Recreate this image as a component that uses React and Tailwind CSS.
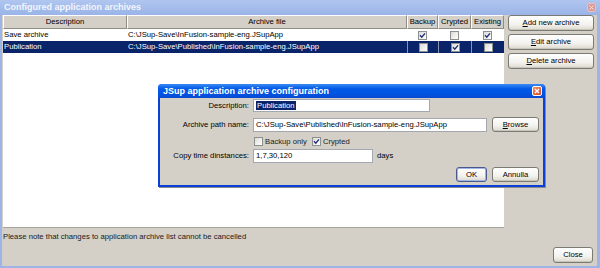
import React from "react";

function Check({ checked }) {
  return (
    <span className="inline-flex items-center justify-center w-[9px] h-[9px] border border-[#8e8f8f] bg-[linear-gradient(135deg,#dcdcd6,#ffffff)]">
      {checked && (
        <svg width="7" height="7" viewBox="0 0 7 7">
          <path d="M1 3.3 L2.8 5.2 L6 1.4" fill="none" stroke="#21307a" strokeWidth="1.4" />
        </svg>
      )}
    </span>
  );
}

function Btn({ children, className = "", def = false }) {
  return (
    <div
      className={
        "flex items-center justify-center rounded-[3px] border text-[7.7px] text-black bg-[linear-gradient(to_bottom,#ffffff,#f3f2ee_60%,#dcd8cd)] " +
        (def ? "border-[#4b5a8c] shadow-[inset_0_0_0_1px_#9fb6e6]" : "border-[#7b7b76] shadow-[inset_0_-1px_0_#c9c5b9]") +
        " " +
        className
      }
    >
      {children}
    </div>
  );
}

const rows = [
  { d: "Save archive", f: "C:\\JSup-Save\\InFusion-sample-eng.JSupApp", b: true, c: false, e: true, sel: false },
  { d: "Publication", f: "C:\\JSup-Save\\Published\\InFusion-sample-eng.JSupApp", b: false, c: true, e: false, sel: true },
];

export default function App() {
  return (
    <div className="w-[600px] h-[268px] flex flex-col bg-[#9cb4e8] overflow-hidden relative font-['Liberation_Sans',Arial,sans-serif] leading-none">
      {/* Title bar */}
      <div className="h-[15px] flex items-center justify-between pl-[4px] pr-[4px] bg-[linear-gradient(to_bottom,#b0c6f0,#9ab4e8)]">
        <span className="text-[9px] font-bold text-[#f2f5fc]">Configured application archives</span>
        <div className="w-[9px] h-[9px] rounded-[2px] bg-[#d99a9a] border border-[#e8c0c0] flex items-center justify-center">
          <svg width="5" height="5" viewBox="0 0 5 5">
            <path d="M0.5 0.5 L4.5 4.5 M4.5 0.5 L0.5 4.5" stroke="#f6e2e2" strokeWidth="1" />
          </svg>
        </div>
      </div>

      {/* Body */}
      <div className="flex-1 flex flex-col bg-[#d4d0c8] ml-[2px] mr-[3px] mb-[2px]">
        <div className="h-[213px] flex">
          {/* Table */}
          <div className="ml-[1px] w-[501px] h-full bg-white flex flex-col border-b border-[#a8a59e]">
            <div className="h-[14px] flex bg-[#d4d0c8] text-[7.7px] text-black">
              {[
                ["Description", "w-[124px]"],
                ["Archive file", "w-[280px]"],
                ["Backup", "w-[31px]"],
                ["Crypted", "w-[33px]"],
                ["Existing", "w-[33px]"],
              ].map(([t, w]) => (
                <div
                  key={t}
                  className={w + " h-full flex items-center justify-center border-t border-l border-white border-r border-r-[#8f8c86] border-b border-b-[#8f8c86]"}
                >
                  {t}
                </div>
              ))}
            </div>
            {rows.map((r) => (
              <div
                key={r.d}
                className={"h-[12px] flex text-[7.7px] " + (r.sel ? "bg-[#0a246a] text-white" : "bg-white text-black")}
              >
                <div className="w-[124px] flex items-center pl-[1px]">{r.d}</div>
                <div className="w-[280px] flex items-center pl-[1px]">{r.f}</div>
                {[
                  [r.b, "w-[31px]"],
                  [r.c, "w-[33px]"],
                  [r.e, "w-[33px]"],
                ].map(([v, w], i) => (
                  <div
                    key={i}
                    className={w + " flex items-center justify-center " + (r.sel ? "border-l border-[#8a93b5]" : "")}
                  >
                    <Check checked={v} />
                  </div>
                ))}
              </div>
            ))}
          </div>

          {/* Buttons */}
          <div className="ml-[4px] w-[86px] flex flex-col gap-[3px]">
            <Btn className="h-[16px]">
              <span>
                <u>A</u>dd new archive
              </span>
            </Btn>
            <Btn className="h-[16px]">
              <span>
                <u>E</u>dit archive
              </span>
            </Btn>
            <Btn className="h-[16px]">
              <span>
                <u>D</u>elete archive
              </span>
            </Btn>
          </div>
        </div>

        <div className="flex-1 flex flex-col">
          <div className="pt-[5px] pl-[1px] text-[7.7px] text-[#1a1a1a]">
            Please note that changes to application archive list cannot be cancelled
          </div>
          <div className="flex-1 flex items-end justify-end pr-[4px] pb-[3px]">
            <Btn className="w-[40px] h-[16px]">Close</Btn>
          </div>
        </div>
      </div>

      {/* Dialog */}
      <div className="absolute left-[158px] top-[84px] w-[387px] h-[103px] flex flex-col rounded-t-[4px] bg-[#0a3fd8] shadow-[1px_1px_0_#8a8a8a]">
        <div className="h-[14px] flex items-center justify-between pl-[5px] pr-[3px] rounded-t-[4px] bg-[linear-gradient(to_bottom,#3b8cf5,#0058e6_35%,#0054e3_70%,#0a48d0)]">
          <span className="text-[9px] font-bold text-white">JSup application archive configuration</span>
          <div className="w-[10px] h-[10px] rounded-[2px] border border-white bg-[linear-gradient(135deg,#f0936f,#d64420)] flex items-center justify-center">
            <svg width="6" height="6" viewBox="0 0 6 6">
              <path d="M1 1 L5 5 M5 1 L1 5" stroke="#ffffff" strokeWidth="1.3" />
            </svg>
          </div>
        </div>
        <div className="flex-1 mx-[2px] mb-[2px] bg-[#d4d0c8] flex flex-col text-[7.7px] text-black">
          {/* Description */}
          <div className="mt-[1px] h-[13px] flex items-center">
            <div className="w-[89px] text-right">Description:</div>
            <div className="ml-[4px] w-[177px] h-[13px] bg-white border border-[#a3a8b0] flex items-center pl-[2px]">
              <span className="bg-[#0a246a] text-white px-[1px] leading-[9px]">Publication</span>
            </div>
          </div>
          {/* Path */}
          <div className="mt-[5px] h-[15px] flex items-center">
            <div className="w-[89px] text-right">Archive path name:</div>
            <div className="ml-[4px] w-[234px] h-[14px] bg-white border border-[#a3a8b0] flex items-center pl-[2px]">
              C:\JSup-Save\Published\InFusion-sample-eng.JSupApp
            </div>
            <Btn className="ml-[5px] w-[47px] h-[15px]">
              <span>
                <u>B</u>rowse
              </span>
            </Btn>
          </div>
          {/* Checkboxes */}
          <div className="mt-[5px] h-[9px] flex items-center">
            <div className="ml-[94px] flex items-center gap-[2px]">
              <Check checked={false} />
              <span className="text-[#222]">Backup only</span>
            </div>
            <div className="ml-[5px] flex items-center gap-[2px]">
              <Check checked={true} />
              <span className="text-[#222]">Crypted</span>
            </div>
          </div>
          {/* Copy time */}
          <div className="mt-[3px] h-[14px] flex items-center">
            <div className="w-[89px] text-right">Copy time dinstances:</div>
            <div className="ml-[4px] w-[120px] h-[14px] bg-white border border-[#a3a8b0] flex items-center pl-[2px]">
              1,7,30,120
            </div>
            <span className="ml-[4px]">days</span>
          </div>
          {/* Buttons */}
          <div className="mt-[4px] h-[15px] flex justify-end pr-[4px] gap-[5px]">
            <Btn className="w-[31px] h-[15px]" def>
              OK
            </Btn>
            <Btn className="w-[47px] h-[15px]">Annulla</Btn>
          </div>
        </div>
      </div>
    </div>
  );
}
